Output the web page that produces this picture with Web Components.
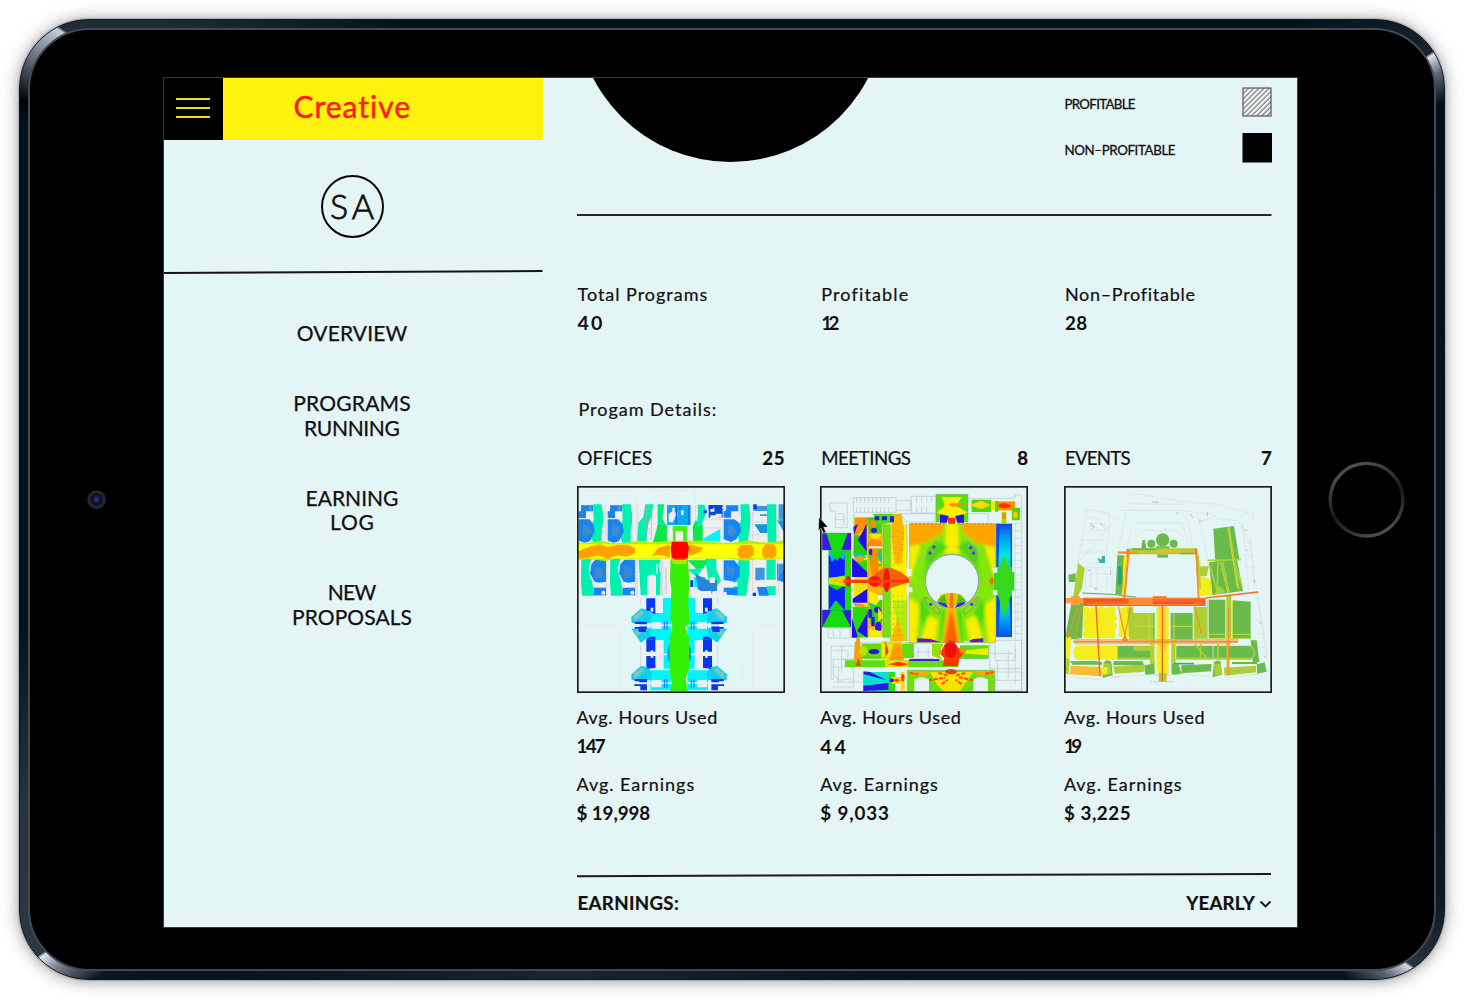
<!DOCTYPE html>
<html lang="en"><head><meta charset="utf-8"><title>Creative – Programs</title>
<style>html,body{margin:0;background:#fff;width:1464px;height:1000px;overflow:hidden}</style></head>
<body>
<tablet-frame>
  <side-bar slot="screen"></side-bar>
  <program-board slot="screen"></program-board>
</tablet-frame>
<script>
const def=(name,html,after)=>customElements.define(name,class extends HTMLElement{
  constructor(){super();this.attachShadow({mode:'open'});}
  connectedCallback(){
    this.shadowRoot.innerHTML=typeof html==='function'?html(this):html;
    if(after)after(this);
  }
});

/* One line of text, tracked out to the width given in w */
def('text-line',`<style>:host{display:block;white-space:pre;font-family:Lato,"Liberation Sans",sans-serif;color:#130f10}span{display:inline-block;font:inherit;-webkit-text-stroke:var(--stroke,.2px) currentColor}</style><span><slot></slot></span>`,el=>{
  const s=el.shadowRoot.querySelector('span'),size=+el.getAttribute('size')||18,n=el.textContent.length,w=+el.getAttribute('w');
  el.style.fontSize=size+'px';
  el.style.fontWeight=el.getAttribute('weight')||400;
  el.style.lineHeight=(el.getAttribute('lh')||29)+'px';
  el.style.height=(el.getAttribute('lh')||29)+'px';
  if(w){const m=s.getBoundingClientRect().width,ls=n>1?(w+size*.04-m)/(n-1):0;s.style.letterSpacing=ls+'px';s.style.marginRight=-ls+'px';}
});

def('tablet-frame',`<style>
:host{display:block;width:1464px;height:1000px}
.pad{padding:19px 19px 20px 19px;}
.rim{box-sizing:border-box;width:1426px;height:961px;padding:8px;border-radius:70px;border:1px solid #0a141c;
 background:conic-gradient(from 0deg,#07131b 0,#07131b 50deg,#17232d 57.4deg,#dfe3ef 57.6deg,#5d6673 58.9deg,#080d14 60.8deg,#05111b 80deg,#05111b 110deg,#0c1820 119deg,#29333d 124.4deg,#d3dae3 124.6deg,#56626e 126deg,#0b141c 127.8deg,#07131c 160deg,#1a252e 200deg,#07121a 229deg,#0c161e 233deg,#7e8896 235.4deg,#dfe7f2 236.5deg,#2c3741 236.7deg,#28343e 246deg,#05111b 260deg,#05111b 298deg,#010407 299.4deg,#5c6571 302deg,#c5cddb 304.9deg,#222c35 305.1deg,#1f2a32 310deg,#07121a 325deg,#07131b 360deg);
 background-origin:border-box;box-shadow:0 0 2px rgba(0,0,0,.45),0 1px 14px rgba(0,0,0,.32),0 0 24px rgba(0,0,0,.12)}
.glass{box-sizing:border-box;width:1408px;height:943px;border:2px solid #404954;border-radius:62px;background:#000;display:grid;grid-template-columns:133px 1135px 136px;align-items:center}
.cam,.home{display:flex;justify-content:center}
.screen{box-sizing:border-box;width:1135px;height:851px;margin-top:5px;border:1px solid #343c3d;background:#e3f5f4;display:grid;grid-template-columns:379px 754px;overflow:hidden}
svg{display:block}
</style>
<div class="pad"><div class="rim"><div class="glass">
<div class="cam"><svg width="20" height="20"><defs><radialGradient id="c"><stop offset="0" stop-color="#3b3f9a"/><stop offset=".3" stop-color="#181b50"/><stop offset=".55" stop-color="#0b0c1c"/><stop offset=".7" stop-color="#20242b"/><stop offset="1" stop-color="#242930"/></radialGradient></defs><circle cx="9.6" cy="9.6" r="9.3" fill="url(#c)"/></svg></div>
<div class="screen"><slot name="screen"></slot></div>
<div class="home"><svg width="80" height="80"><defs><linearGradient id="h" x1=".25" y1="0" x2=".7" y2="1"><stop offset="0" stop-color="#53535b"/><stop offset=".3" stop-color="#35373d"/><stop offset=".55" stop-color="#15191b"/><stop offset=".8" stop-color="#303238"/><stop offset="1" stop-color="#53535b"/></linearGradient></defs><circle cx="40.5" cy="39.7" r="36.3" fill="none" stroke="url(#h)" stroke-width="3.4"/></svg></div>
</div></div></div>`);

def('menu-button',`<style>:host{display:flex;box-sizing:border-box;flex-direction:column;gap:7px;align-items:center;justify-content:center;width:59px;height:62px;background:#000;padding:0 1px 2px 0}i{width:34px;height:2px;background:#e5dc20}</style><i></i><i></i><i></i>`);

def('round-logo',`<style>:host{display:flex;box-sizing:border-box;width:63px;height:63px;border:2px solid #090607;border-radius:50%;justify-content:center}text-line{margin-top:7px}</style><text-line size="34" w="42.5" lh="43" weight="300" style="--stroke:.8px">SA</text-line>`);

def('nav-item',el=>`<style>:host{display:flex;flex-direction:column;align-items:center}text-line{--stroke:.25px}</style>`+
 el.getAttribute('lines').split('|').map(p=>{const[t,w]=p.split(':');return `<text-line size="21" lh="24.5" w="${w}">${t}</text-line>`}).join(''));

def('side-bar',`<style>
:host{display:flex;flex-direction:column;width:379px;height:849px}
header{display:flex;height:62px;width:378.5px;background:#fff20c}
header div{flex:1;padding:12px 0 0 70.5px}
header text-line{color:#ff1d1f;--stroke:.5px}
.logo{display:flex;justify-content:center;height:129px;padding:35px 3px 0 0;box-sizing:border-box}
svg{display:block}
nav{display:flex;flex-direction:column;padding:44.5px 3px 0 0}
nav-item{height:94.5px}nav-item:first-child{height:70px}
</style>
<header><menu-button></menu-button><div><text-line size="30" lh="33" w="116">Creative</text-line></div></header>
<div class="logo"><round-logo></round-logo></div>
<svg width="379" height="8"><path d="M0 4L378.5 2" stroke="#171314" stroke-width="2"/></svg>
<nav><nav-item lines="OVERVIEW:109.5"></nav-item><nav-item lines="PROGRAMS:116.5|RUNNING:95"></nav-item><nav-item lines="EARNING:92|LOG:43"></nav-item><nav-item lines="NEW:47.5|PROPOSALS:119"></nav-item></nav>`);

def('legend-row',el=>`<style>:host{display:flex;justify-content:space-between;align-items:center;height:30px;width:207.5px}svg{display:block}text-line{--stroke:.3px;padding-top:4px}</style>
<text-line size="13.3" lh="30" w="${el.getAttribute('w')}">${el.getAttribute('label')}</text-line>
<svg width="30" height="30">${el.hasAttribute('hatched')?`<defs><pattern id="p" width="3.6" height="3.6" patternUnits="userSpaceOnUse" patternTransform="rotate(45)"><path d="M2 0V4.2" stroke="#5b5758" stroke-width="1"/></pattern></defs><rect x=".5" y=".5" width="29" height="29" fill="#f2f8f8"/><rect x="1" y="1" width="28" height="28" fill="url(#p)" stroke="#5a5556" stroke-width="1.2"/>`:`<rect x=".5" width="29.5" height="29.5" fill="#000"/>`}</svg>`);

def('stat-pair',el=>`<style>:host{display:block}.v{--stroke:0}</style><text-line size="18" w="${el.getAttribute('lw')}">${el.getAttribute('label')}</text-line><text-line class="v" lh="28" size="${el.getAttribute('vs')||18.8}" weight="700" w="${el.getAttribute('vw')}">${el.getAttribute('value')}</text-line>`);

/* ---- heat maps ---- */
const R=(c,s,o='')=>`<path fill="${c}" ${o} d="${s.trim().split(/\s+/).map(q=>{const[x,y,w,h]=q.split(',');return `M${x} ${y}h${w}v${h}h${-w}z`}).join('')}"/>`;
const P=(c,...d)=>d.map(q=>`<path fill="${c}" d="M${q}z"/>`).join('');
const L=(c,w,d,o='')=>`<path fill="none" stroke="${c}" stroke-width="${w}" d="${d}" ${o}/>`;
const C=(c,...a)=>a.map(q=>`<ellipse fill="${c}" cx="${q[0]}" cy="${q[1]}" rx="${q[2]}" ry="${q[3]||q[2]}"/>`).join('');

function offices(){
  const W='#eeeeF0',T='#00f0b0',B='#1585f4',D='#0637f5',Cy='#00f4fa';
  let s=L('#eadfe2',2,'M25 31H195V70M200 60L235 30H375V70M240 55L300 40L340 55M30 437H148V633M210 560V633M547 633V437H640M515 540V600','stroke-dasharray="5 3"');
  s+=R(W,'25,72,615,275');
  s+=`<g filter="url(#j)">`;
  /* west office bays */
  for(const x of[25,112]){
    s+=R(B,`${x+7},75,36,18 ${x},93,22,20`)+R('#44a0d8',`${x+30},78,9,13`);
    s+=P(T,`${x+43} 72h26l4 30v25l-4 25v35h-26l-8-30 10-40z`);
    s+=P(B,`${x} 117h32l12 14 4 22-14 30-16 4-18-6z`)+P('#3c8bd0',`${x+14} 130l20 8 6 20-16 12-14-10z`);
    s+=C(W,[x+2,82,6]);
  }
  for(const x of[37,124]){
    s+=P(T,`${x-4} 236h30l-8 28 4 24 8 20 4 38h-36l-3-40z`);
    s+=P(B,`${x+38} 238h32v66l-20 4-14-4-14-24 4-28z`)+P('#3d88ce',`${x+38} 258l24 6-4 28-22 2z`)+R(B,`${x+33},322,37,23`)+R(W,`${x+30},307,38,12`)+C(W,[x+62,337,6]);
  }
  s+=P(T,'225 72h25l-8 40-8 15-6 60h-28l4-60 15-18z','205 238h66l-6 20 6 22-2 65h-12v-58l-12-5-14 10v53h-20z');
  s+=R(W,'232,286,22,60 258,250,4,32')+L('#aaa9b5',2,'M228 75V175M243 75V180M228 85h10M228 100h10M228 115h10M228 130h10M228 145h10M228 160h10M275 240V346M287 260V340');
  s+=P('#00ed80','262 72h20l-6 42 14 26v50h-34l6-55z')+P('#08e64b','262 135h28v50h-42z','375 120l22 14v54h-28l-2-48z','352 240h60l-12 24-22 2z');
  s+=R('#0ba8f2','290,74,71,60')+R('#0649e0','415,74,42,38')+R(W,'295,100,14,26 332,90,8,14 306,82,7,36 299,96,22,14')+L('#1d66ed',4,'M318 76v55M328 76v12M355 78v55');
  s+=R('#4cee14','307,137,43,54')+R(W,'316,152,22,30 295,150,12,36');
  s+=P(T,'382 73h20l8 20-18 44h-14l5-35z','350 268l48-6-18 28z','404 236h34v30l14 35-15 20-14 20-10-50z')+P(Cy,'390 180l60-34v38z','370 290h35l14 30h-48z')+P('#2c82dd','375 280l38 20v33l-30-5z','386 300h54v32h-50z')+R(W,'420,82,12,12 436,100,18,12 418,290,16,18 400,120,54,14 420,105,20,12 372,335,28,11 354,276,10,36')+R(D,'415,75,13,11 400,90,9,9 360,300,8,20');
  s+=R(B,'466,75,38,18 460,92,22,20')+P(T,'510 72h26l4 32v25l-8 58h-26l-4-30 10-40z')+P(B,'460 117h32l16 12 4 24-14 24-16 8-22-8z')+P('#3c8bd0','474 132l20 8 4 20-16 10-12-12z')+P(T,'506 236h30v50l-8 60h-36l-4-40z')+P(B,'460 240h32l16 20v28l-14 16-34-5z')+P('#3c8bd0','470 256l22 6-2 24-20-2z')+R(B,'460,322,42,22')+R(W,'458,306,44,12')+C(W,[462,82,6],[464,340,6]);
  s+=R('#3d95dc','550,77,42,30 625,72,16,46 555,262,28,38 620,250,20,52')+R(D,'549,72,10,15 547,337,10,10')+R(T,'590,72,28,118 588,237,28,108')+P('#1599d3','552 132h38v30l-18 0z','620 120h21v36z')+R(W,'549,92,20,30 566,92,24,10 552,158,40,30 622,157,20,28 548,238,40,18 568,298,52,20 622,298,20,30')+P(B,'560 320h28l8 26h-30z','621 300l20-34v40z');
  s+='</g>';
  s+=L('#b9b8bf',1.6,'M105 72V185M200 72V350M108 238V346M195 240V346M460 72V115M547 72V190M547 236V346M625 72V190M625 237V346M550 125h40M550 163h40M400 118h58M400 143h58M376 76V130','stroke-dasharray="8 3"');
  s+=L('#dfc5ca',2,'M211 350V370M211 495V560M442 350V370M442 495V560');
  s+=`<g filter="url(#j)">`;
  /* corridor */
  s+=P('#b8ee12','25 187h30l40-6 30 7h40l40-7 40 5 60-5h90l50 6h40l50-7 35 6h40l30-7v55l-40 6-40-4-30 5-60-6h-330l-35 7-50-6-50 6-50-6z');
  s+=R('#ffff00','20,192,625,42');
  s+=P('#ffa305','20 214l40-16 30-6 22 8 30-7 30 0 22 10v14l-22 12-30-4-30 10-30-10-30 8-25 2z','244 226l20-24 35-9v40l-22-8z','354 192l44 10-8 12-32 14z','502 206l10-12h30l8 8v22l-12 10h-28l-8-10z','576 204l10-12h24l8 10v24l-10 8h-24l-8-8z');
  s+='</g>';
  /* spine and lower bays */
  for(const k of[1,-1]){
    s+=`<g ${k==1?'':'transform="translate(653 0) scale(-1 1)"'}>`;
    for(const y of[0,172]) s+=R(Cy,`240,${398+y},62,${y?60:76} 278,354,24,44`)+P('#11cfee',`183 ${410+y}l30-26 22 6 10 20-5 18h-56z`)+P('#74c8c8',`190 ${405+y}l26-15 5 8-28 28z`)+R(D,`193,${424+y},37,7 207,${431+y},23,8`);
    s+=P('#11cfee','183 445l55-2 10 8v25l-22 1-14 10z')+P('#74c8c8','188 455l18-10 8 10-10 12z')+R(D,'228,354,27,37 193,440,37,5 205,445,22,10 228,477,27,37 228,527,27,34 192,612,38,5 210,616,20,14')+R(Cy,'240,445,60,34 280,470,22,95')+P(D,'228 380l12 10h15v12l-15-6z','228 477l12-8h15v10z','228 565l12-12h15v10z')+R(W,'183,432,118,6 228,520,75,5 243,426,30,19 183,606,118,5 243,599,30,22 256,354,20,30 258,489,20,64 241,382,8,12 241,510,8,22')+L('#2563ed',3,'M282 423v25M290 423v25M282 597v25M290 597v25')+P('#069de9','303 482l-12 24v30l12 18z');
    s+='</g>';
  }
  s+=P('#35f004','301 237h52l4 70-3 60 4 65-14 8 12 30v95l-10 30 6 38h-52l4-28-6-30v-100l8-38-6-20 3-90-4-30z')+P('#9ef000','302 236h50l-6 16h-38z');
  s+=P('#ff0000','305 184h46l5 18-4 32-10 4h-28l-10-6-3-30z')+L('#ff8d00',2,'M303 184h51M304 236h48');
  return s;
}

function meetings(){
  const W='#b4b3b8';
  let s=L(W,1.5,'M120 52H248V96H120zM130 52v16M142 52v16M154 52v16M166 52v16M178 52v16M190 52v16M202 52v16M214 52v16M226 52v16M130 80v16M142 80v16M154 80v16M166 80v16M178 80v16M190 80v16M202 80v16M214 80v16M226 80v16M248 60h45v30h-45M293 48h75v50h-75zM310 48v18M325 48v18M340 48v18M355 48v18M310 80v18M325 80v18M340 80v18M260 100h105v25H280zM460 54h145V44h20v590M460 100h65v28M50 68h52v74H66V92H50zM72 100h20v36M66 118h26M45 445h65v28H45zM60 448v22M80 448v22M54 497h70v40H60v60H54zM60 510h44v20M85 497v80M60 560h60v60H55M75 560v50M60 580l18 20 35-5M60 605h85M90 537h50v30M530 480h95v120h-95zM545 490v50h60v-40M530 520h70M552 540v60M585 510v85M530 565h95M300 490h60v45h-60zM315 500v30M345 500v30M310 515h45M545 575h80v55h-80z');
  s+=L('#c8c6ca',1.6,'M600 130h23M600 152h23M600 174h23M600 196h23M600 218h23M600 240h23M600 262h23M600 284h23M600 306h23M600 328h23M600 350h23M600 372h23M600 394h23M600 416h23M600 438h23M600 460h23M606 130v480M614 345v80');
  s+=`<g filter="url(#s)">`;
  /* far west halls */
  s+=R('#16dc10','27,158,86,283')+R('#e4f5f5','25,210,21,178')+P('#4014e8','27 158l12 0 16 51H27z','113 158h-10l-18 50h28z','27 441l28-52H27z','113 441V390H86z')+P('#0822ff','46 225l24 10 25-10v60l-24 5-25 8z','46 390V315l24 15 25-15v75z')+P('#00baf4','46 210h49l-2 30-20-14-18 20z','46 390l20-30 28 30z')+P('#18d80a','48 210h47l-24 32z','48 390l22-28 24 28z')+P('#c4ee00','46 292l50-5v32l-50-9z')+P('#ffc400','50 300l46-8v22z');
  s+=R('#f1e407','122,110,42,362')+R('#2cd811','95,215,17,145 116,240,45,50 118,380,46,90')+P('#ff8e00','125 112h38v22l-30 30h-10z')+P('#20d010','122 165h30l10 60h-42z')+P('#2211ef','160 130v84l-26-34z','120 140l14-10-12 35z','116 232l46 44v14h-46z','118 355l44-30v42h-44z','116 472v-58l18 58z','162 472v-74l-30 54z')+P('#00c6e0','120 222h30l8 10-30 6z','118 370h30l-10 12z')+C('#ff9d00',[138,236,14,8],[140,376,14,5]);
  s+=R('#ffb400','164,110,44,360')+P('#32d908','165 112h40v50h-38z','165 210l40-10v56h-34z','170 350h36v80h-36z')+P('#ffe600','166 160h40l-20 24zM176 250l8-40 20 40z')+C('#ff8900',[184,195,22,18],[183,250,12,40],[180,130,9,12])+C('#3112e9',[182,150,9,8],[172,215,5,10],[195,440,10,16],[170,400,7,14],[192,388,10,9])+C('#00c9c0',[200,232,5,10],[176,372,8,6],[186,456,9,6])+R('#2013e9','168,358,16,10 174,410,10,28')+P('#f5ee00','165 330l42 20-20 25-22-10z','195 380l14 30-15 15z','165 445l40 8v16h-40z');
  s+=R('#6fe20a','209,132,23,340')+R('#f6f100','232,132,48,350')+P('#b4ec0a','238 360h42v122h-20z')+P('#ffb400','236 100h29l8 60-8 90h-20l-10-80z','232 482l22-70 20 70z')+P('#ff5f00','163 302l30-28 20-12h18l30 12 38 28-38 12-30 10h-18l-20-10z')+C('#f81205',[220,300,10,36],[184,303,19,16],[105,303,8,16])+P('#ff3b08','90 298h210l36 5-36 5H90z');
  s+=P('#53dd0a','178 100h60v26l-40 8z')+R('#1b25e6','184,108,14,12 205,108,16,12 230,108,12,18');
  /* north lobby */
  s+=R('#58e00c','368,42,96,84')+P('#ffee00','385 50h60l-18 26 34 20-34 30h-20l-36-30 24-18z')+R('#f9e905','475,62,130,28')+R('#54d70d','475,58,58,37')+P('#ffd900','468 74l36-12 28 12-28 12z')+P('#ff8b00','545 64h60v26h-60z','405 74l12-6 50 6-50 5z')+C('#ff3000',[573,76,18,7])+R('#51d60a','545,62,10,32 596,82,24,38')+C('#ffc400',[606,104,7,10])+P('#2415e4','380 102l26 5-6 20h-20z','452 102l-26 5 6 20h20z')+P('#ff3200','403 112h24l-6 54h-10z')+R('#a0e000','565,95,14,34')+C('#ff8000',[572,108,6,9]);
  s+='</g>';
  /* atrium */
  s+=`<clipPath id="a"><path d="M287 130H547V487H287z"/></clipPath><g clip-path="url(#a)"><g filter="url(#b)">`+R('#84e60a','277,120,280,377')+P('#ffa505','277 120h118l-8 38-50 30-60 10z','557 120H440l10 38 42 32 65 10z')+P('#f9ed05','398 130h36l4 90h-44z','287 200l34-8-30 110z','547 200l-34-5 34 106z','277 345l42 30-12 120h-30z','557 345l-44 30 12 120h32z','345 405l30 15-10 70h-45z','487 405l-30 15 15 70h40z')+P('#4bdb0b','345 200l40-16 20 16-55 50-20 50z','490 200l-42-16-18 16 55 50 16 50z','330 350l20 50-24 40-10-60zM502 350l-20 50 24 40 10-60z','385 390l16 0-6 100h-16z','445 390l-16 0 6 100h16z')+P('#ffc300','402 380h24l16 120h-58z')+P('#ff5e00','411 390h6l20 110h-48z')+'</g></g>';
  s+=`<g filter="url(#s)">`;
  s+=P('#5b16df','312 474l40 2 30 10h-70z','510 474l-30 2-20 10h50z');
  /* east hall */
  s+=`<linearGradient id="e" x1="0" y1="0" x2="0" y2="1"><stop offset="0" stop-color="#1545d8"/><stop offset=".12" stop-color="#009ef4"/><stop offset=".28" stop-color="#00e8e8"/><stop offset=".4" stop-color="#24d650"/><stop offset=".62" stop-color="#30d924"/><stop offset=".72" stop-color="#00e0be"/><stop offset=".84" stop-color="#00aaf4"/><stop offset="1" stop-color="#0b4de8"/></linearGradient><rect x="549" y="130" width="47" height="340" fill="url(#e)"/>`+P('#0a4be6','549 130l10 0-4 130h-6z','596 130h-5l1 130h4z','549 345l12 8-6 115h-6z','596 345l-8 10 5 113h3z')+P('#38d71c','542 275h61v55h-61z','573 225l18 60h-36z','573 410l-20-70h40z')+P('#ff6b05','526 302l10-14 6 14-6 14z');
  /* south */
  s+=R('#5fdd0b','145,490,60,45 440,495,85,40 260,490,40,42')+P('#e8f000','440 511l85-8v22l-85-6z','205 482h60v60h-60z')+P('#ff9e00','130 470l8 0 12 85h-28l2-60zM240 490h22l12 60h-50z')+C('#2c16db',[182,514,16,8])+C('#b9e200',[150,512,12,14])+R('#64df0b','95,540,340,20')+R('#f6d800','215,540,70,20')+P('#ff3603','225 552l30-8 32 8-30 6z','127 556l8-22 8 22zM385 556l20-16h28v18z','216 480l10 35-10 15zM380 520l15-30 14-10h10l14 20 20 17-16 20-2 16h-46l4-20z')+C('#ff8a00',[372,515,14,9],[448,512,10,8])+C('#f01010',[412,508,18,24])+R('#4e19d6','288,536,90,6')+P('#94df0a','356 490h36l-16 30 12 20-32-15z');
  s+=R('#00e3d0','150,575,78,57')+P('#3014e3','150 573l20 2 50 25-68-18z','150 632v-16l76-8v20z')+R('#39d90d','226,575,20,57')+R('#fbdc00','234,590,30,20 262,575,12,56')+C('#ff3d02',[268,592,5,11],[250,600,8,5])+C('#3014e3',[235,600,7,6]);
  s+=R('#70e009','282,570,262,63')+P('#f9e200','350 575h130l-25 35-15 22h-50l-20-20z')+P('#ffa800','285 572h60v14h-50zM485 572h58v12h-50z')+L('#ff4a03',6,'M375 578l30 8M345 600l50-8M385 612l18-14M455 578l-30 8M480 600l-45-10M445 612l-18-14M290 578l24 4M515 580l25-4','stroke-dasharray="12 4"')+C('#ff3503',[413,574,18,8]);
  s+='</g>';
  s+=R('#e4f5f5','303,596,44,37 480,596,44,37')+P('#e4f5f5','303 600q20-20 44 0z','480 600q20-20 44 0z');
  s+=C('#e2f4f4',[416,302,80,80]);
  s+=P('#e8c200','400 338h26l20 6 8 14-20 16-20 6-20-6-20-16 8-14z')+P('#46c614','372 360l22-18 8 34z','458 360l-22-18-8 34z')+P('#4d15dc','370 362l26 8 10 12-24-6z','460 362l-26 8-10 12 24-6z')+P('#ff7300','411 338h8l3 46h-14z');
  s+=L('#8a9bab',3,'M391 378A80 80 0 1 1 441 378');
  s+=L('#7c9c8c',3,'M370 182l-26 28-6 24 16 10 20-46zM462 182l26 28 6 24-16 10-20-46zM334 350l8 24 34 30 4-14-28-30zM496 350l-8 24-34 30-4-14 28-30z')+C('#3047df',[362,200,5],[350,218,5],[472,202,5],[481,218,5],[352,372,5],[475,372,5])+C('#f58f22',[358,214,4],[468,214,4],[362,382,4],[484,364,4]);
  s+=R('#e6f2f2','166,198,42,6 194,345,15,14 285,265,10,22 283,320,14,16 538,262,14,16 538,330,14,14 450,483,20,10')+L('#7f8880',2,'M164 110V470M209 132V470M232 132V480M281 130V262M281 345V487M287 130H400M432 130H547V262M547 345V487H287V345M114 158V232M114 345V472h50M122 100V230M95 212v150M122 488H300V532M145 532h155M440 535h86V495M27 158h86M27 441h86M46 210V388M549 470h47M596 130V265M282 633V570H544V633M368 126V42h96v84M150 575v57','opacity=".6"');
  s+=L('#75802d',2,'M240 150V260M254 150V260M268 140V260M240 345V470M254 345V470M268 345V470','stroke-dasharray="3 14"')+L('#776666',3,'M295 130H395M435 130H540','stroke-dasharray="3 9"');
  return s;
}

function events(){
  const G='#6abb4b',O='#fb8a2e',Y='#f5ee1d',A='#acd034';
  let s=L('#d9cbd0',1.6,'M220 42l28 0 130 22 100 8 110 30M220 70l160 2-2-10M190 90H370l20 30M205 95L180 225M230 128H375l20 70M222 150l-12 50M180 110L60 250M90 88l65 10v60l-10 80-65 22-20-10zM95 110l40 6M100 130h45v20h-45zM385 92l80 10 20 15 60 4 30 60 25 160 30 180M392 120l15 85M420 100l30 130M440 120l18-6M555 130l20 200M580 160l10 160M590 100l-10 30M85 262h80v80H82zM100 280h50v40h-50zM120 262v80M600 350l15 100 15 90M570 190h15M570 225h20M575 260h20M580 300h20M590 420h20M600 460h20M600 500h25M70 180h70M66 215h80M240 165l20-15h90l30 20M40 590l110 10M170 590l90-6M350 580l120 10M500 592l120-12','stroke-dasharray="5 3"');
  s+=L('#aaa5ad',2,'M100 130l10 12M130 128l8 10M105 145l8-8M285 65h20M326 145v5M360 95v8M398 100l8 12M450 95v12M425 122h12M562 150h6M565 210h6M605 428h8M620 530h6M90 270l12 0M160 270v14M110 325l10 0M592 300v8')+P('#39aeb0','120 232l12 6 3-12h8v22h-16z');
  s+=C(G,[316,179,20],[282,190,12],[349,190,12])+P(G,'252 204l3-24 8-2 4 26z','296 198h40v14h-40z','300 222h32v10h-32z')+R(A,'215,204,200,18')+R(G,'225,204,70,6 370,216,40,6');
  s+=P(G,'468 145l62-8 16 102-72 8z','455 246l84-6 18 92-92 12z','33 283l22-4v26H35z')+L(A,5,'M515 140l30 190M482 240l-3 100M455 250l28 92M495 240l20 95M530 240l24 80M450 240l100-2')+L('#ddda30',3,'M490 245l22 95M512 142l28 180');
  s+=P(G,'180 225h20l-4 118h-22z')+R('#2aa36a','182,258,11,55')+P(Y,'200 224h12l-6 126h-11z')+P(A,'62 248l20 16-8 60-20 38H46z','420 258h34l-6 30h-24z')+P(Y,'428 288l32 8 4 50h-36z')+P(A,'470 345l15-30 20 20zM415 225l10 0 6 100-10 0z');
  s+=L('#54b55a',3,'M75 338l90 4 70 8 4 8')+P(G,'44 370l35-8-5 112-45 4z','24 470l18-100 12-2-10 102z');
  s+=P(G,'454 358h50v116h-50z','526 360l54 4v112h-54z','228 398h64v82h-64z','340 398h66v82h-66z')+R(A,'228,398,60,82 410,380,40,95 507,345,15,130');
  s+=P(Y,'76 382l12-4 8 8 12-8 12 4 12-6 15 8 12-8 14 6v20l8 12-8 10 8 12-8 12v26H84l-10-12 8-14-6-16 6-14z','186 385l30-10 12 6-8 90h-35z','298 380h36v110h-36z')+P(A,'210 385l18-5v100h-12z');
  s+=L('#c9dc3c',3,'M228 438h65M340 438h70M410 380v90M455 462h50M526 462h54M455 474h126M450 360v120M525 360v118M350 400v75M275 400v75');
  s+=P(G,'180 496h110v42H180z','356 496h110v42H356z','468 496h112q14 4 14 20t-14 22H468z','580 480h18l8 65h-20z')+P(Y,'66 495h114v44H66q-18-4-18-22t18-22z','298 490h36v90l-8 4-18-2-10-12z','24 470h18l-6 70H24z')+P(A,'278 475h14v104h-14zM342 475h13v104h-13z','228 495l64 4v12h-64z')+L('#e4ef9f',2,'M66 495h225v43H66q-18-4-18-22t18-21zM356 495h215q18 3 20 21t-20 22H356z')+L(A,5,'M180 534h110M356 534h220M412 490l36 44M430 490v45M482 490v50M510 480v100');
  s+=L('#36ad7a',5,'M40 545h80M170 545h85M350 550h60')+P(G,'140 545q10-10 22 0l4 40-30 8zM262 555l28-5 2 30-28 4zM344 550h20l8 30-28 4zM372 555l90-4 0 22-90 6zM470 545q12-8 20 0l4 38-28 8zM598 552l24-6 6 28-28 6z')+P(A,'168 558l94-6v22l-90 6zM500 562l96-6v20l-94 10z','24 530l14 10-4 40H24zM138 548l20 2 5 30-22 6z','470 550l20 0 5 32-22 4zM304 578h24v26h-24z')+P('#fcba35','40 556l90 4 4 28-96-6z')+P(Y,'130 562l20-2v20l-20 4z');
  s+=P(G,'44 545h90v8H44zM168 546h90v8h-90zM524 545h76v6h-76z');
  s+=L('#d4a6ac',1.5,'M278 604h74M290 585h48M25 580l15 0M160 590h30');
  s+=L(O,7,'M182 217h60M48 484h494')+L('#fbb63b',3,'M52 478h492M52 490h470M296 212h120')+L('#f3b22b',5,'M240 214h170')+L(O,6,'M215 206l-14 148M417 206l7 148')+L('#fb6c2a',5,'M210 206v24M415 204v20M445 353l158-18')+L('#fac23c',2,'M210 220l-18 130M428 240l-4 110');
  s+=R('#ff9f35','25,353,55,16 40,348,28,27')+R('#f9612a','78,352,367,25')+R('#ff8a3c','214,354,72,20')+R('#fb6c2a','286,348,42,30 285,362,140,14')+L('#fa4d20',6,'M80 360h130M290 368h120')+L('#ff9e40',2,'M90 372h330M90 354h350');
  s+=L('#f9602a',4,'M116 375l12 212M315 375v228')+L(O,3.5,'M183 378l20 90M220 378l-18 92M412 375l20 85M514 385v200M203 465v18M60 385l-30 90')+P('#fb8a2e','190 484l13-20 12 20z')+L(O,3,'M72 378l-20 100')+L('#fbb63b',2,'M308 380v130M322 380v130');
  return s;
}
const maps={offices,meetings,events};

def('heat-map',el=>{const k=el.getAttribute('kind');return `<style>:host{display:block;width:208px;height:207px}svg{display:block;overflow:visible}</style><svg width="208" height="207" viewBox="20 17 624 621"><defs><clipPath id="f"><rect x="23" y="20" width="618" height="615"/></clipPath>
<filter id="j" x="-2%" y="-2%" width="104%" height="104%"><feTurbulence type="fractalNoise" baseFrequency=".09" numOctaves="2" seed="4"/><feDisplacementMap in="SourceGraphic" scale="3" xChannelSelector="R" yChannelSelector="G"/></filter>
<filter id="s" x="-2%" y="-2%" width="104%" height="104%"><feTurbulence type="fractalNoise" baseFrequency=".06" numOctaves="1" seed="7" result="n"/><feGaussianBlur in="SourceGraphic" stdDeviation="2" result="g"/><feDisplacementMap in="g" in2="n" scale="4" xChannelSelector="R" yChannelSelector="G"/></filter>
<filter id="b" x="-5%" y="-5%" width="110%" height="110%"><feGaussianBlur stdDeviation="5"/></filter></defs><g clip-path="url(#f)">${maps[k]()}</g><rect x="22.5" y="19.5" width="619" height="616" fill="none" stroke="#171213" stroke-width="4.8"/>${k=='meetings'?'<path d="M17 110l27 30-13 1 7 15-8 3-7-16-8 8z" fill="#000" stroke="#fff" stroke-width="1.5"/>':''}</svg>`});

def('program-card',el=>{const a=n=>el.getAttribute(n);return `<style>:host{display:flex;flex-direction:column;width:208px}.h{display:flex;justify-content:space-between;height:41.5px;padding-left:1px}.s{padding-top:10.5px;display:flex;flex-direction:column;gap:10px}</style>
<div class="h"><text-line size="18.7" w="${a('tw')}">${a('title')}</text-line><text-line size="18.7" weight="700" w="${a('cw')}">${a('count')}</text-line></div>
<heat-map kind="${a('kind')}"></heat-map>
<div class="s"><stat-pair label="Avg. Hours Used" lw="140" value="${a('hours')}" vw="${a('hw')}" vs="${a('hs')||18.8}"></stat-pair><stat-pair label="Avg. Earnings" lw="117" value="${a('earn')}" vw="${a('ew')}"></stat-pair></div>`});

def('program-board',`<style>
:host{display:flex;flex-direction:column;box-sizing:border-box;width:754px;height:849px;padding:0 25px 0 33.5px}
svg{display:block}
.hero{display:flex;justify-content:space-between;height:135px}
.legend{display:flex;flex-direction:column;gap:16px;padding-top:9px}
.cols{display:grid;grid-template-columns:208px 208px 208px;column-gap:35.7px}
.stats{padding:64px 0 0 1px;height:52px}
.title{padding:63px 0 0 2px}
.cards{padding-top:20.5px}
.foot{display:flex;justify-content:space-between;padding:11px 0 0 1px}
.pick{display:flex;gap:4px;align-items:center}
</style>
<div class="hero"><svg width="400" height="135"><circle cx="153.6" cy="-70.5" r="154.5" fill="#000"/></svg><div class="legend"><legend-row label="PROFITABLE" w="70.5" hatched></legend-row><legend-row label="NON–PROFITABLE" w="110.5"></legend-row></div></div>
<svg width="695" height="3"><path d="M0 2H694.5" stroke="#2c2627" stroke-width="2"/></svg>
<div class="cols stats"><stat-pair label="Total Programs" lw="129" value="40" vw="24" vs="19.6"></stat-pair><stat-pair label="Profitable" lw="86" value="12" vw="17.5"></stat-pair><stat-pair label="Non–Profitable" lw="129" value="28" vw="21.5"></stat-pair></div>
<div class="title"><text-line size="18" w="137">Progam Details:</text-line></div>
<div class="cols cards">
<program-card kind="offices" title="OFFICES" tw="74" count="25" cw="21.5" hours="147" hw="28.5" earn="$ 19,998" ew="73"></program-card>
<program-card kind="meetings" title="MEETINGS" tw="89" count="8" hours="44" hw="25" hs="19.8" earn="$ 9,033" ew="68"></program-card>
<program-card kind="events" title="EVENTS" tw="65" count="7" hours="19" hw="17.5" earn="$ 3,225" ew="66"></program-card>
</div>
<svg width="695" height="6" style="margin-top:45px"><path d="M0 4.2L694 2" stroke="#1d1819" stroke-width="2"/></svg>
<div class="foot"><text-line size="18.7" weight="700" w="100.5">EARNINGS:</text-line><div class="pick"><text-line size="18.7" weight="700" w="68">YEARLY</text-line><svg width="13" height="12"><path d="M1.5 3.5l5 5 5-5" fill="none" stroke="#130f10" stroke-width="1.8"/></svg></div></div>`);
</script>
</body></html>
